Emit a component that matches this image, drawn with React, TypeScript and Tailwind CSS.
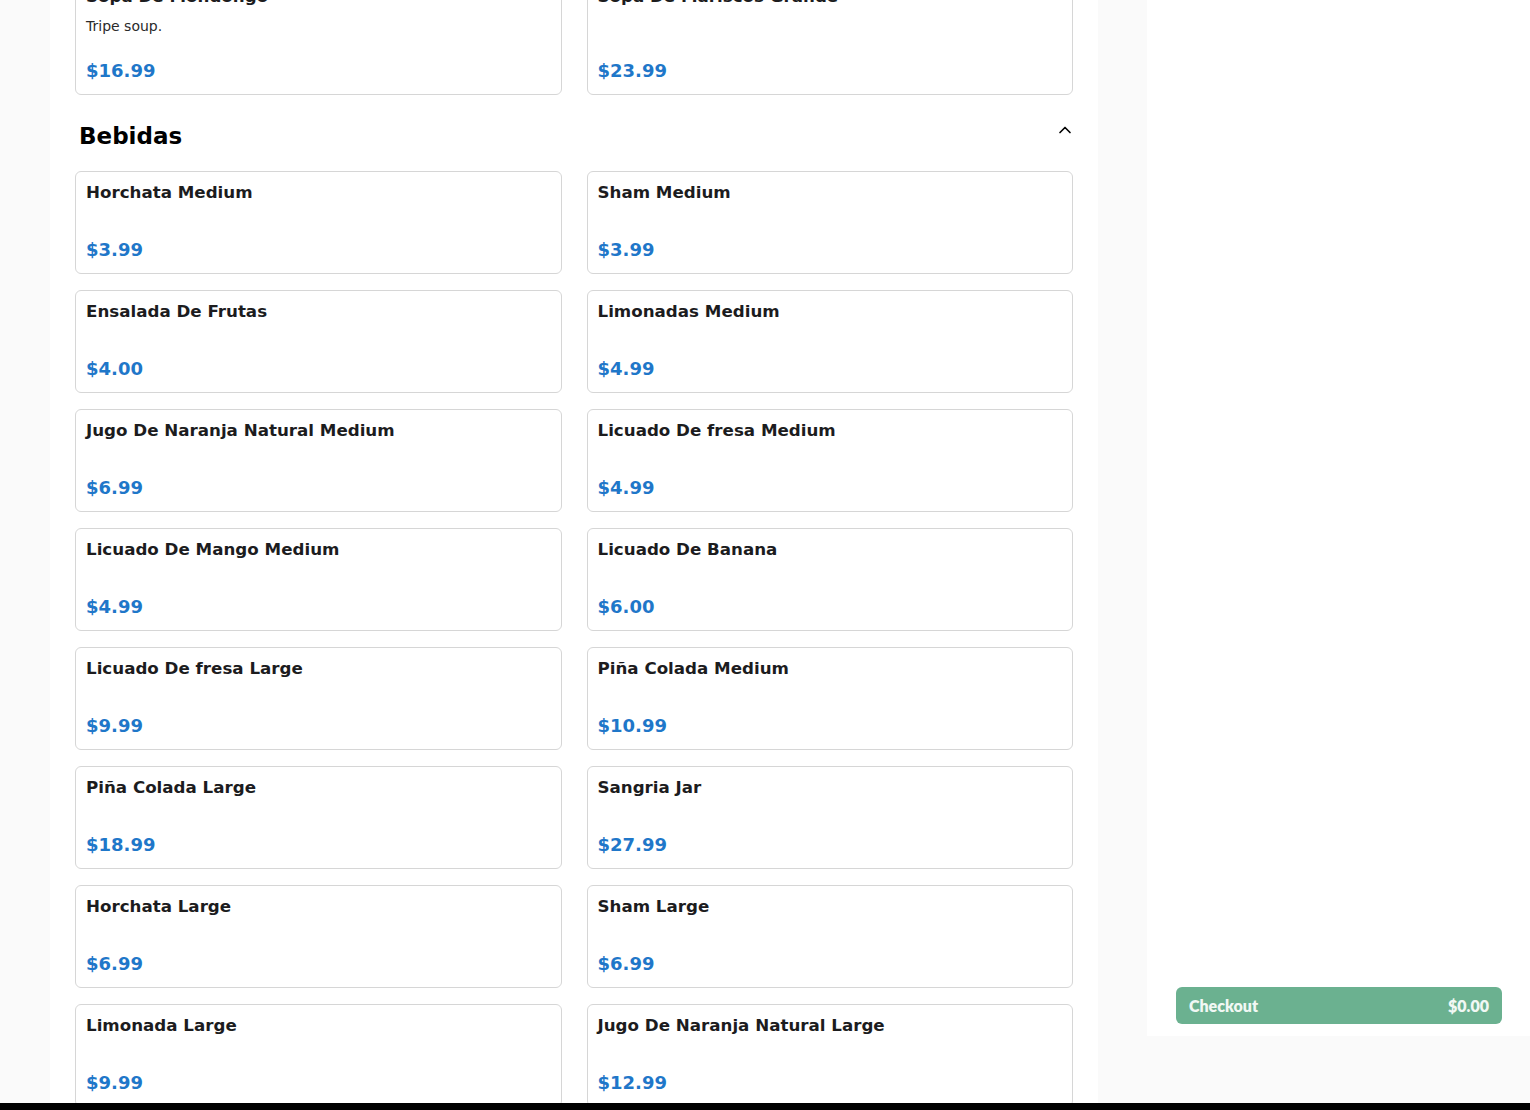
import { ChevronUp } from 'lucide-react';

type Item = { name: string; price: string; description?: string };

const topRow: Item[] = [
  { name: 'Sopa De Mondongo', price: '$16.99', description: 'Tripe soup.' },
  { name: 'Sopa De Mariscos Grande', price: '$23.99' },
];

const bebidas: Item[] = [
  { name: 'Horchata Medium', price: '$3.99' },
  { name: 'Sham Medium', price: '$3.99' },
  { name: 'Ensalada De Frutas', price: '$4.00' },
  { name: 'Limonadas Medium', price: '$4.99' },
  { name: 'Jugo De Naranja Natural Medium', price: '$6.99' },
  { name: 'Licuado De fresa Medium', price: '$4.99' },
  { name: 'Licuado De Mango Medium', price: '$4.99' },
  { name: 'Licuado De Banana', price: '$6.00' },
  { name: 'Licuado De fresa Large', price: '$9.99' },
  { name: 'Piña Colada Medium', price: '$10.99' },
  { name: 'Piña Colada Large', price: '$18.99' },
  { name: 'Sangria Jar', price: '$27.99' },
  { name: 'Horchata Large', price: '$6.99' },
  { name: 'Sham Large', price: '$6.99' },
  { name: 'Limonada Large', price: '$9.99' },
  { name: 'Jugo De Naranja Natural Large', price: '$12.99' },
];

function MenuCard({ item }: { item: Item }) {
  return (
    <div className="flex flex-col min-h-[103px] rounded-md border border-[#d6d6d6] bg-white p-2.5">
      <h3 className="text-[16.7px] leading-[20px] font-bold text-[#1c1c1e]">{item.name}</h3>
      {item.description && (
        <p className="mt-2.5 text-sm leading-5 text-[#2a2a2a]">{item.description}</p>
      )}
      <div className="mt-auto pt-[22px] text-lg leading-[26px] font-bold text-[#1f77c9]">{item.price}</div>
    </div>
  );
}

export default function App() {
  return (
    <div className="h-[1110px] overflow-hidden bg-[#fafafa] flex flex-col" style={{ fontFamily: '"DejaVu Sans", sans-serif' }}>
      <div className="flex flex-1 min-h-0">
        <main className="ml-[50px] w-[1048px] bg-white px-[25px] overflow-hidden">
          <div className="-mt-[25px] grid grid-cols-2 gap-x-[25px] gap-y-4">
            {topRow.map((it) => <MenuCard key={it.name} item={it} />)}
          </div>
          <div className="flex items-start justify-between pl-1 pt-[27px] pb-[21px]">
            <h2 className="text-[23px] leading-[28px] font-bold text-black">Bebidas</h2>
            <ChevronUp size={20} strokeWidth={2} className="-mt-[2px] -mr-[2px] text-black" />
          </div>
          <div className="grid grid-cols-2 gap-x-[25px] gap-y-4">
            {bebidas.map((it) => <MenuCard key={it.name} item={it} />)}
          </div>
        </main>
        <aside className="ml-[49px] w-[383px] h-[1036px] bg-white flex flex-col justify-end pl-[29px] pr-[28px] pb-3">
          <button className="h-[37px] w-full rounded-md bg-[#6bb190] px-[13px] flex items-center justify-between text-[16px] font-extrabold text-[#f1f8f4]" style={{ fontFamily: 'Lato, "Open Sans", sans-serif' }}>
            <span>Checkout</span>
            <span>$0.00</span>
          </button>
        </aside>
      </div>
      <div className="h-[7px] bg-black" />
    </div>
  );
}
